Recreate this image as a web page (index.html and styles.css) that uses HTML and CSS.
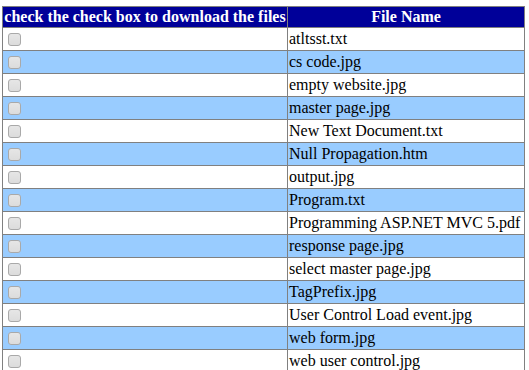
FILE: index.html
```html
<!DOCTYPE html>
<html lang="en">
<head>
  <meta charset="UTF-8">
  <title>Download Files</title>
  <link rel="stylesheet" href="styles.css">
</head>
<body>
  <table class="files-grid">
    <thead>
      <tr>
        <th class="col-check">check the check box to download the files</th>
        <th class="col-name">File Name</th>
      </tr>
    </thead>
    <tbody>
      <tr><td><input type="checkbox"></td><td>atltsst.txt</td></tr>
      <tr class="alt"><td><input type="checkbox"></td><td>cs code.jpg</td></tr>
      <tr><td><input type="checkbox"></td><td>empty website.jpg</td></tr>
      <tr class="alt"><td><input type="checkbox"></td><td>master page.jpg</td></tr>
      <tr><td><input type="checkbox"></td><td>New Text Document.txt</td></tr>
      <tr class="alt"><td><input type="checkbox"></td><td>Null Propagation.htm</td></tr>
      <tr><td><input type="checkbox"></td><td>output.jpg</td></tr>
      <tr class="alt"><td><input type="checkbox"></td><td>Program.txt</td></tr>
      <tr><td><input type="checkbox"></td><td>Programming ASP.NET MVC 5.pdf</td></tr>
      <tr class="alt"><td><input type="checkbox"></td><td>response page.jpg</td></tr>
      <tr><td><input type="checkbox"></td><td>select master page.jpg</td></tr>
      <tr class="alt"><td><input type="checkbox"></td><td>TagPrefix.jpg</td></tr>
      <tr><td><input type="checkbox"></td><td>User Control Load event.jpg</td></tr>
      <tr class="alt"><td><input type="checkbox"></td><td>web form.jpg</td></tr>
      <tr><td><input type="checkbox"></td><td>web user control.jpg</td></tr>
    </tbody>
  </table>
</body>
</html>
```

FILE: styles.css
```css
body {
  margin: 6px 0 0 2px;
  font-family: "Liberation Serif", "Times New Roman", serif;
  font-size: 16px;
  color: #000;
  background: #fff;
}

.files-grid {
  border-collapse: collapse;
  border: 1px solid #808080;
}

.files-grid th,
.files-grid td {
  border: 1px solid #808080;
  padding: 0 1px;
  white-space: nowrap;
}

.files-grid th {
  background: #000099;
  color: #fff;
  font-weight: bold;
  height: 20px;
  text-align: center;
}

.col-check {
  width: 282px;
}

.col-name {
  width: 234px;
}

.files-grid td {
  height: 22px;
  text-align: left;
  vertical-align: middle;
}

.files-grid tr.alt td {
  background: #99ccff;
}

.files-grid input[type="checkbox"] {
  appearance: none;
  display: block;
  width: 13px;
  height: 13px;
  margin: 0 0 0 4px;
  border: 1px solid #a9a9a9;
  border-radius: 3px;
  background: linear-gradient(#e6e6e6, #dcdcdc);
  box-sizing: border-box;
}
```
